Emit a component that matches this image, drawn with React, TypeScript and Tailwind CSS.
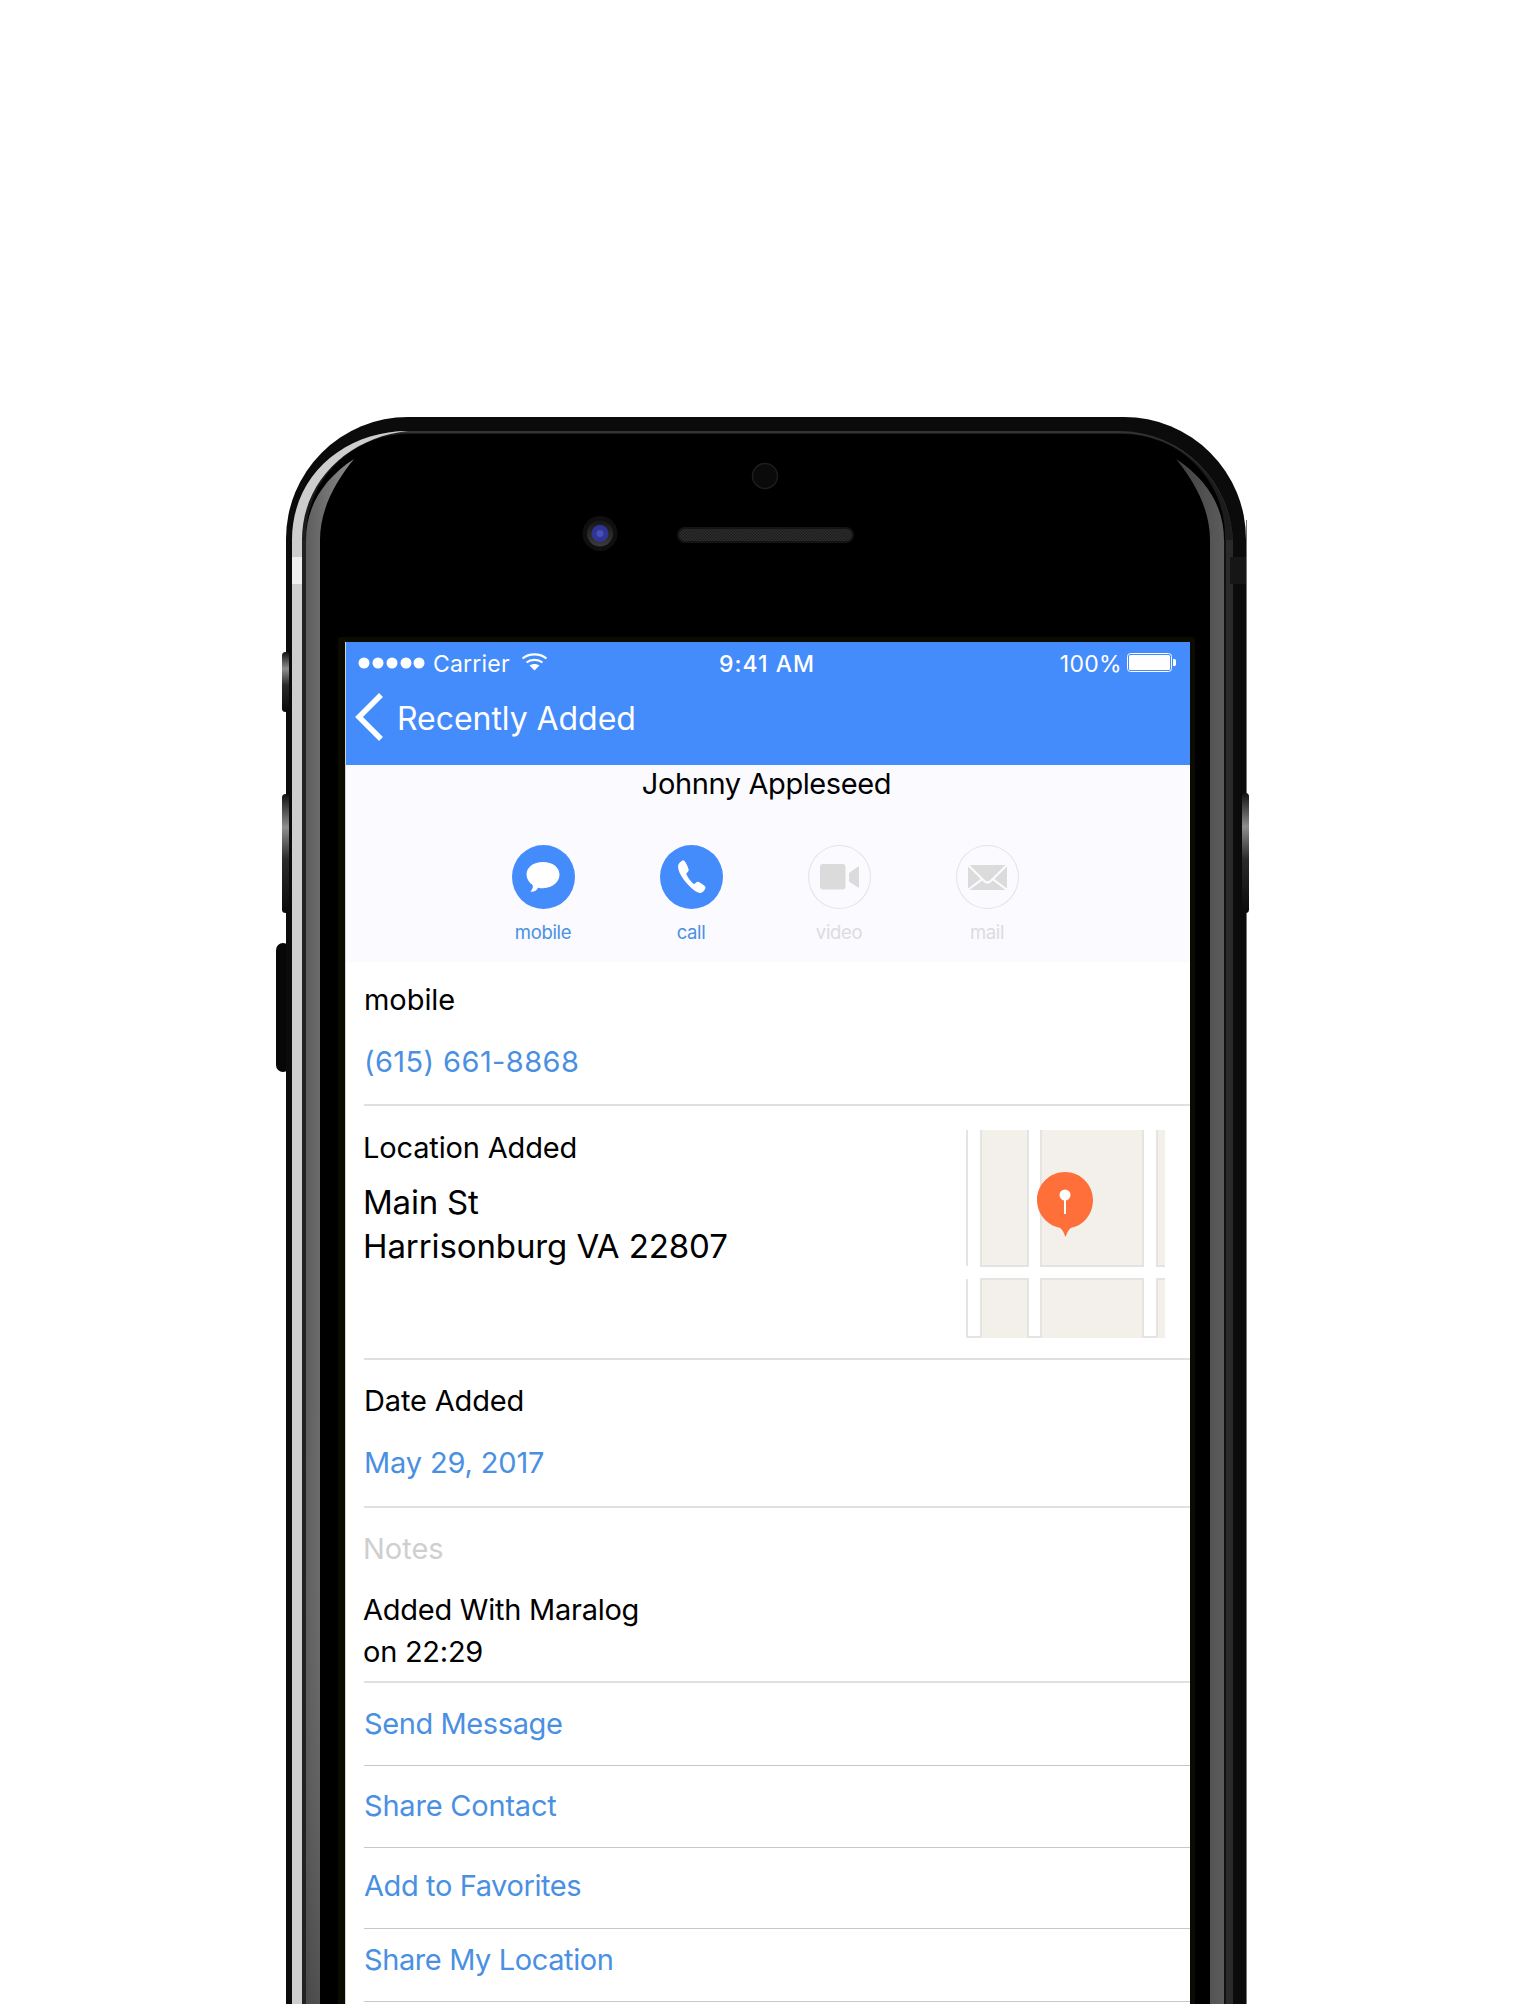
import React from "react";

const font = { fontFamily: "Inter, 'Noto Sans', sans-serif" };

function PhoneBody() {
  return (
    <svg className="absolute left-0 top-0" width="1526" height="2004" viewBox="0 0 1526 2004">
      <defs>
        <linearGradient id="btn" x1="0" y1="0" x2="0" y2="1">
          <stop offset="0" stopColor="#111" />
          <stop offset="0.28" stopColor="#8f8f8f" />
          <stop offset="0.55" stopColor="#2b2b2b" />
          <stop offset="1" stopColor="#0a0a0a" />
        </linearGradient>
        <linearGradient id="wedgeL" x1="0" y1="0" x2="1" y2="0">
          <stop offset="0" stopColor="#5e5e5e" />
          <stop offset="1" stopColor="#8c8c8c" />
        </linearGradient>
        <linearGradient id="wedgeLV" x1="0" y1="0" x2="0" y2="1">
          <stop offset="0" stopColor="#808080" stopOpacity="0" />
          <stop offset="1" stopColor="#3a3a3a" stopOpacity="0.55" />
        </linearGradient>
        <linearGradient id="wedgeR" x1="0" y1="0" x2="1" y2="0">
          <stop offset="0" stopColor="#404040" />
          <stop offset="1" stopColor="#5c5c5c" />
        </linearGradient>
        <linearGradient id="ring" x1="0" y1="0" x2="0" y2="1">
          <stop offset="0" stopColor="#161616" />
          <stop offset="1" stopColor="#3a3a3a" />
        </linearGradient>
        <pattern id="mesh" width="3" height="3" patternUnits="userSpaceOnUse">
          <rect width="3" height="3" fill="#1b1b1b" />
          <rect width="1.5" height="1.5" fill="#303030" />
          <rect x="1.5" y="1.5" width="1.5" height="1.5" fill="#303030" />
        </pattern>
      </defs>

      {/* casing */}
      <rect x="1246" y="520" width="1" height="1500" fill="#777" />
      <rect x="276" y="943" width="14" height="129" rx="7" fill="#070707" />
      <rect x="286" y="417" width="960" height="1720" rx="122" fill="#0b0b0b" />
      <rect x="292" y="431" width="941" height="1700" rx="114" fill="#333" />
      <rect x="292" y="433" width="941" height="1700" rx="113" fill="#1c1c1c" />
      <rect x="1225" y="540" width="8" height="1464" fill="#2a2a2a" />
      <rect x="306" y="434" width="919" height="1700" rx="102" fill="#000" />
      <rect x="1224" y="540" width="2" height="1464" fill="#111" />
      <rect x="302" y="540" width="4" height="1464" fill="#222" />

      {/* side buttons */}
      <rect x="282" y="652" width="7" height="60" rx="3.5" fill="url(#btn)" />
      <rect x="282" y="794" width="7" height="119" rx="3.5" fill="url(#btn)" />
      <rect x="1242" y="793" width="7" height="120" rx="3.5" fill="url(#btn)" />

      {/* left silver band */}
      <path d="M292 2004V540C292 475 345 431 408 431C350 437 302 480 302 540V2004Z" fill="#cdcdcd" />
      <rect x="292" y="557" width="10" height="27" fill="#efefef" />
      <rect x="1230" y="557" width="16" height="27" fill="#161616" />

      {/* glare wedges */}
      <path d="M306 2004V540C306 505 325 478 354 459C335 482 320 510 320 540V2004Z" fill="url(#wedgeL)" />
      <rect x="306" y="1400" width="14" height="604" fill="url(#wedgeLV)" />
      <path d="M1224 2004V540C1224 505 1205 478 1176 459C1195 482 1210 510 1210 540V2004Z" fill="url(#wedgeR)" />

      {/* front sensor, camera, earpiece */}
      <circle cx="765" cy="476" r="12.5" fill="#0a0a0a" stroke="#1d1d1d" strokeWidth="1.5" />
      <circle cx="600" cy="533.5" r="17.5" fill="#0f0f0f" />
      <circle cx="600" cy="533.5" r="13" fill="url(#ring)" />
      <circle cx="600" cy="533.5" r="8.5" fill="#2f3595" />
      <circle cx="600" cy="533.5" r="3.5" fill="#4a50b5" />
      <rect x="677" y="527" width="177" height="16" rx="8" fill="#141414" />
      <rect x="679" y="529" width="173" height="12" rx="6" fill="url(#mesh)" />

      {/* dark lip round the display */}
      <rect x="338" y="637" width="857" height="1400" rx="3" fill="#0c0b02" />
    </svg>
  );
}

function Wifi() {
  return (
    <svg width="27" height="19" viewBox="0 0 27 19" fill="none" stroke="#fff" strokeWidth="2.2">
      <path d="M1.5 6.5C8 1 19 1 25.5 6.5" />
      <path d="M5.5 10.5C10 7 17 7 21.5 10.5" />
      <path d="M8.6 13.4L13.5 18.5L18.4 13.4C15.5 11.4 11.5 11.4 8.6 13.4Z" fill="#fff" stroke="none" />
    </svg>
  );
}

function Battery() {
  return (
    <svg width="49" height="19" viewBox="0 0 49 19">
      <rect x="0.5" y="0.5" width="44" height="18" rx="3" fill="none" stroke="#fff" />
      <rect x="2" y="2" width="41" height="15" rx="1.5" fill="#fff" />
      <path d="M46 6h1.5a1.5 1.5 0 0 1 1.5 1.5v4a1.5 1.5 0 0 1-1.5 1.5H46Z" fill="#fff" />
    </svg>
  );
}

function ActionIcon({ kind, label }: { kind: "message" | "call" | "video" | "mail"; label: string }) {
  const active = kind === "message" || kind === "call";
  return (
    <div className="flex w-[148px] flex-col items-center">
      <div
        className={
          active
            ? "flex h-16 w-[63px] items-center justify-center rounded-[50%] bg-[#448bfb]"
            : "flex h-16 w-[63px] items-center justify-center rounded-[50%] border border-[#e4e4e6]"
        }
      >
        {kind === "message" && (
          <svg width="36" height="33" viewBox="0 0 36 34">
            <path
              d="M18 1C8 1 1 6.500 1 14C1 18.500 3.500 22 7 24.500C8.300 26 7.500 29 5 31.500C8 32 11.500 31 13 27.500C14.500 28 16.500 28 18 28C28 28 35 21.500 35 14C35 6.500 28 1 18 1Z"
              fill="#fff"
            />
          </svg>
        )}
        {kind === "call" && (
          <svg width="29" height="34" viewBox="0 0 30 36">
            <path
              d="M5.500 0.500C3 2 0.500 4 0.800 8C1.500 15 9 25 17 31.500C20 34 24 35.500 26 34.500C27.500 33.700 29.500 31.500 29.800 29.500C30 28.500 29 27.500 27 26C24.500 24 22 22.500 21 23L18 25.500C16 25 9.800 17 9.500 14.500L12 11.500C12.500 10.500 11 7 9.500 4C8 1 6.500 0 5.500 0.500Z"
              fill="#fff"
            />
          </svg>
        )}
        {kind === "video" && (
          <svg width="39" height="26" viewBox="0 0 39 26">
            <rect x="0" y="0" width="25.500" height="25.500" rx="3" fill="#dbdbdb" />
            <path d="M29 9L38 2.500C38.500 2.200 39 2.500 39 3V23C39 23.500 38.500 23.800 38 23.500L29 17.500Z" fill="#dbdbdb" />
          </svg>
        )}
        {kind === "mail" && (
          <svg width="39" height="25" viewBox="0 0 37 25" preserveAspectRatio="none">
            <path d="M1.500 0H35.500L21 15C19.500 16.800 17.500 16.800 16 15Z" fill="#dbdbdb" />
            <path d="M0 1.500L12 14L0 23.500Z" fill="#dbdbdb" />
            <path d="M37 1.500L25 14L37 23.500Z" fill="#dbdbdb" />
            <path d="M1.500 25L13.300 15.500L15 17C17.500 19.300 19.500 19.300 22 17L23.700 15.500L35.500 25Z" fill="#dbdbdb" />
          </svg>
        )}
      </div>
      <div
        className={
          active
            ? "mt-[12px] text-[18.5px] leading-[22px] tracking-[-0.35px] text-[#4a90e2]"
            : "mt-[12px] text-[18.5px] leading-[22px] tracking-[-0.35px] text-[#dcdcdc]"
        }
      >
        {label}
      </div>
    </div>
  );
}

function MapThumb() {
  const block = "url(#mapgrid)";
  const edge = "#e4e4e2";
  return (
    <svg width="199" height="208" viewBox="0 0 199 208" className="shrink-0">
      <defs>
        <pattern id="mapgrid" width="8" height="8" patternUnits="userSpaceOnUse">
          <rect width="8" height="8" fill="#f2f0e9" />
          <path d="M0 0H8M0 0V8" stroke="#f5f3ed" strokeWidth="1" />
        </pattern>
      </defs>
      <rect x="0" y="0" width="2" height="136" fill={edge} />
      <rect x="15" y="-3" width="47" height="139" fill={block} stroke={edge} strokeWidth="2" />
      <rect x="75" y="-3" width="102" height="139" fill={block} stroke={edge} strokeWidth="2" />
      <rect x="191" y="-3" width="11" height="139" fill={block} stroke={edge} strokeWidth="2" />
      <path d="M1 149V207H15" fill="none" stroke={edge} strokeWidth="2" />
      <rect x="15" y="149" width="47" height="62" fill={block} stroke={edge} strokeWidth="2" />
      <path d="M62 207H75" fill="none" stroke={edge} strokeWidth="2" />
      <rect x="75" y="149" width="102" height="62" fill={block} stroke={edge} strokeWidth="2" />
      <path d="M177 207H191" fill="none" stroke={edge} strokeWidth="2" />
      <rect x="191" y="149" width="11" height="62" fill={block} stroke={edge} strokeWidth="2" />
      <path
        d="M99 42C83.500 42 71 54.500 71 70C71 84 81.500 95.500 93 97.500C96 98.500 97.500 102 99.500 107C101.500 102 103 98.500 106 97.500C117.500 95.500 127 84 127 70C127 54.500 114.500 42 99 42Z"
        fill="#ff6f3a"
      />
      <circle cx="99" cy="65" r="5.500" fill="#fff" />
      <rect x="98" y="68" width="2" height="16" fill="#fff" />
    </svg>
  );
}

function Line({ tone = "a" }: { tone?: "a" | "b" }) {
  return <div className={tone === "a" ? "ml-[18px] h-[2px] bg-[#e0e0e0]" : "ml-[18px] h-[1px] bg-[#c8c8c8]"} />;
}

const ActionRow = ({ label, cls }: { label: string; cls: string }) => (
  <div className={"pl-[18px] text-[29px] leading-[36px] text-[#4a90e2] " + cls}>{label}</div>
);

export default function App() {
  return (
    <div className="relative h-[2004px] w-[1526px] overflow-hidden bg-white" style={font}>
      <PhoneBody />
      <div className="relative ml-[345px] w-[845px] pt-[642px]">
        <div className="border-l border-[#d2d2d2] bg-white">
          {/* Header */}
          <div className="h-[123px] bg-[#448bfb] text-white">
            <div className="flex h-[44px] items-center pl-[12px] pr-[14px]">
              <div className="flex flex-1 items-center">
                <svg width="67" height="12" viewBox="0 0 67 12" fill="#fff" className="-mt-[2px]">
                  <circle cx="6" cy="6" r="5.500" />
                  <circle cx="20" cy="6" r="5.500" />
                  <circle cx="34" cy="6" r="5.500" />
                  <circle cx="48" cy="6" r="5.500" />
                  <circle cx="61" cy="6" r="5.500" />
                </svg>
                <span className="ml-[8px] text-[23px] leading-[28px] tracking-[0.2px]">Carrier</span>
                <span className="ml-[11px] -mt-[5px]">
                  <Wifi />
                </span>
              </div>
              <div className="text-[23px] font-medium leading-[28px] tracking-[1px]">9:41 AM</div>
              <div className="flex flex-1 items-center justify-end">
                <span className="text-[23px] leading-[28px] tracking-[0.3px]">100%</span>
                <span className="ml-[5px] -mt-[3px]">
                  <Battery />
                </span>
              </div>
            </div>
            <div className="flex h-[64px] items-center pl-[9px]">
              <svg width="28" height="48" viewBox="0 0 28 48" fill="none" stroke="#fff" strokeWidth="5.500" className="-mt-[2px]">
                <path d="M26 2L4 24L26 46" />
              </svg>
              <span className="ml-[14px] pt-[1px] text-[32px] leading-[40px] tracking-[-0.05px]">Recently Added</span>
            </div>
          </div>

          {/* Contact */}
          <div className="h-[197px] bg-[#fafaff]">
            <div className="pr-[3px] pt-[1px] text-center text-[29px] leading-[36px] tracking-[-0.4px] text-black">
              Johnny Appleseed
            </div>
            <div className="mt-[43px] flex pl-[123px]">
              <ActionIcon kind="message" label="mobile" />
              <ActionIcon kind="call" label="call" />
              <ActionIcon kind="video" label="video" />
              <ActionIcon kind="mail" label="mail" />
            </div>
          </div>

          {/* mobile */}
          <div className="h-[142px] pl-[18px] pt-[20px] text-[29px] leading-[36px] tracking-[-0.05px]">
            <div className="text-black">mobile</div>
            <div className="mt-[26px] tracking-[0.4px] text-[#4a90e2]">(615) 661-8868</div>
          </div>
          <Line />

          {/* Location */}
          <div className="flex h-[252px] justify-between pl-[17px] pr-[25px] pt-[24px]">
            <div className="text-black">
              <div className="text-[29px] leading-[36px] tracking-[-0.15px]">Location Added</div>
              <div className="mt-[14px] text-[33px] leading-[44px] tracking-[-0.2px]">Main St</div>
              <div className="text-[33px] leading-[44px] tracking-[-0.1px]">Harrisonburg VA 22807</div>
            </div>
            <MapThumb />
          </div>
          <Line />

          {/* Date */}
          <div className="h-[146px] pl-[18px] pt-[23px] text-[29px] leading-[36px] tracking-[-0.15px]">
            <div className="text-black">Date Added</div>
            <div className="mt-[26px] text-[#4a90e2]">May 29, 2017</div>
          </div>
          <Line />

          {/* Notes */}
          <div className="h-[173px] pl-[17px] pt-[23px] text-[29px] tracking-[-0.25px]">
            <div className="leading-[36px] tracking-[0px] text-[#cfcfcf]">Notes</div>
            <div className="mt-[22px] leading-[42px] text-black">
              Added With Maralog
              <br />
              on 22:29
            </div>
          </div>
          <Line />

          <ActionRow label="Send Message" cls="h-[82px] pt-[23px] tracking-[-0.4px]" />
          <Line tone="b" />
          <ActionRow label="Share Contact" cls="h-[81px] pt-[22px] tracking-[-0.2px]" />
          <Line tone="b" />
          <ActionRow label="Add to Favorites" cls="h-[80px] pt-[20px] tracking-[-0.4px]" />
          <Line tone="b" />
          <ActionRow label="Share My Location" cls="h-[72px] pt-[13px] tracking-[-0.4px]" />
          <Line tone="b" />
          <div className="h-[10px]" />
        </div>
      </div>
    </div>
  );
}
